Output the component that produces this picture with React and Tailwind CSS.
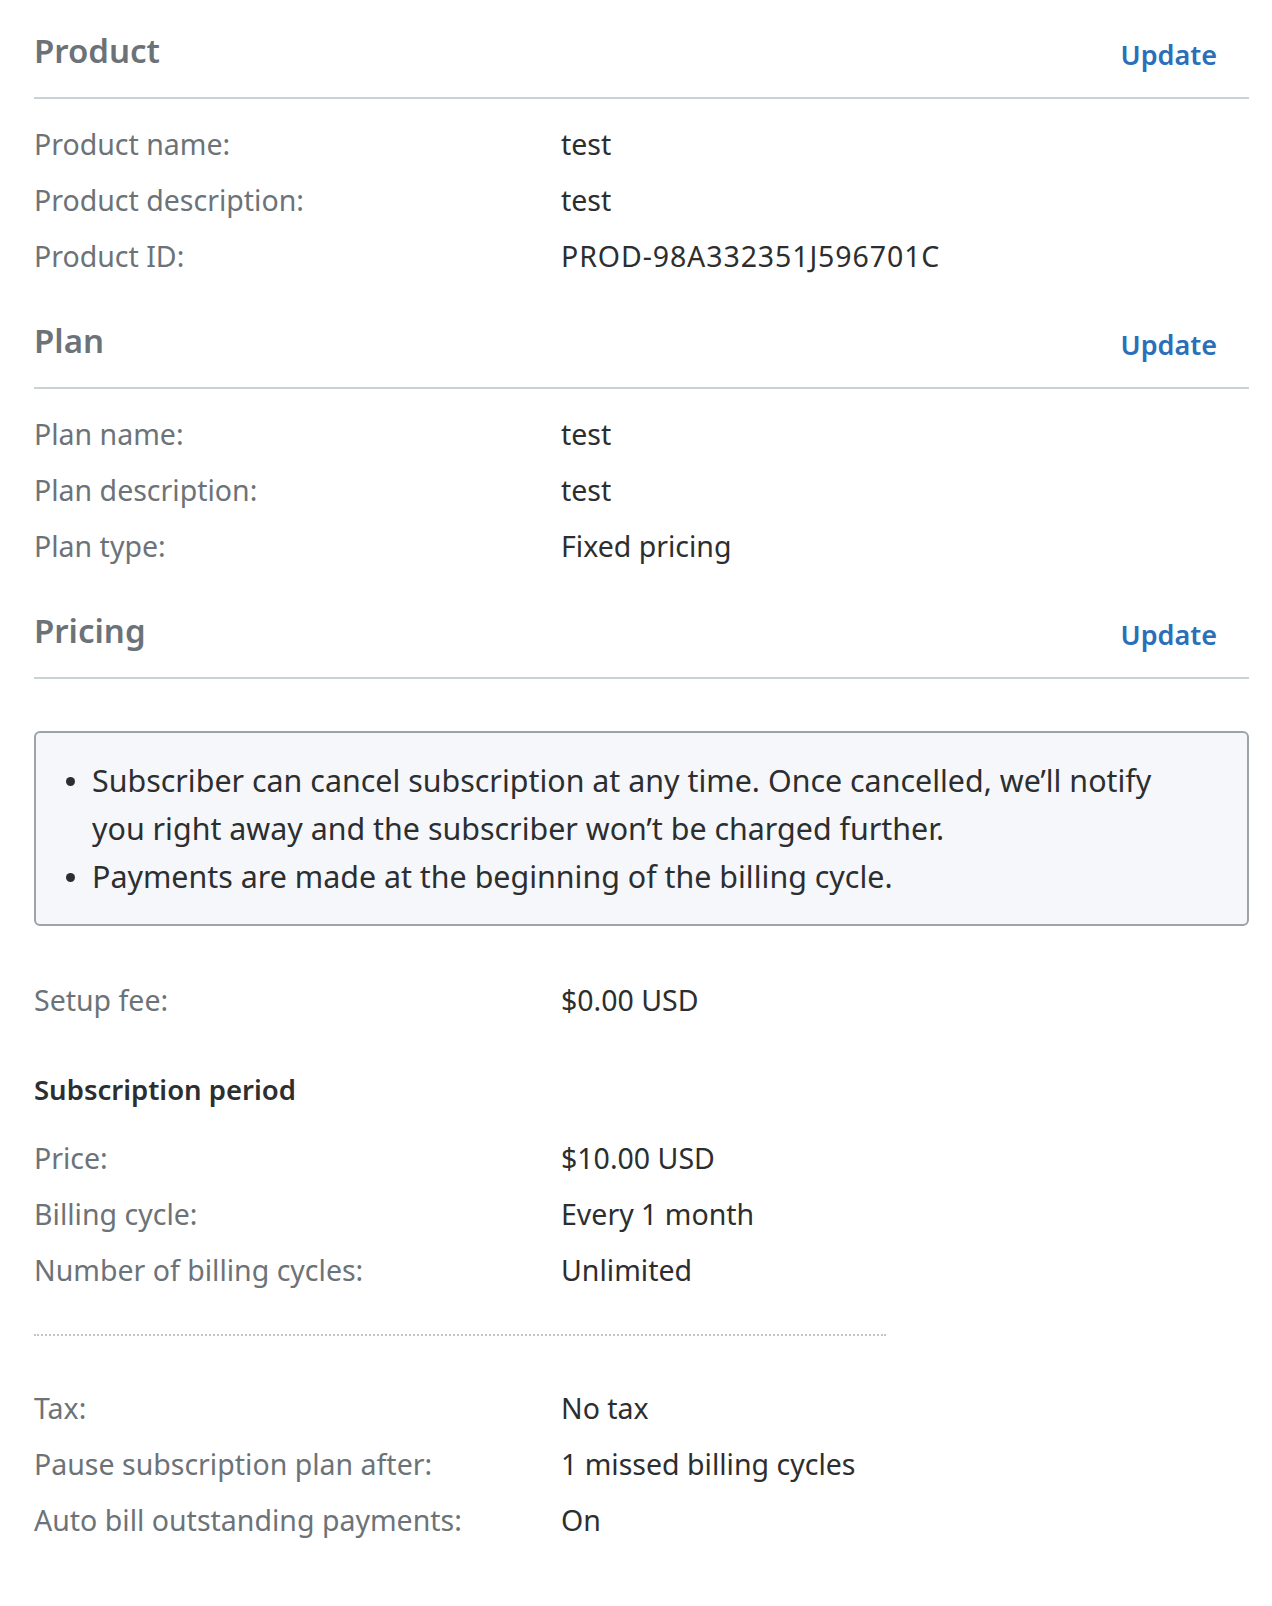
const font = { fontFamily: '"Noto Sans", "Open Sans", sans-serif' };

function SectionHeader({ title, first }) {
  return (
    <div
      className={`flex justify-between items-start border-b-2 border-[#cbd2d6] pb-[22px] ${
        first ? 'pt-[31px]' : 'pt-[37px]'
      }`}
    >
      <h2 className="text-[33px] leading-[40px] font-semibold text-[#6c7378]">{title}</h2>
      <a href="#" className="mt-[4px] mr-[32px] text-[27px] leading-[40px] font-semibold text-[#2a6fb7]">
        Update
      </a>
    </div>
  );
}

function Row({ label, value, mono }) {
  return (
    <div className="flex text-[28.5px] leading-[56px]">
      <div className="w-[527px] shrink-0 text-[#6c7378]">{label}</div>
      <div className={`text-[#2c2e2f] ${mono ? 'tracking-[0.9px]' : ''}`}>{value}</div>
    </div>
  );
}

function Bullet({ children }) {
  return (
    <div className="flex">
      <span className="w-[26px] shrink-0 pt-[20px]">
        <span className="block w-[9px] h-[9px] rounded-full bg-[#2c2e2f]" />
      </span>
      <span>{children}</span>
    </div>
  );
}

export default function App() {
  return (
    <div className="min-h-[1606px] bg-white pl-[34px] pr-[23px]" style={font}>
      <SectionHeader title="Product" first />
      <div className="mt-[17px]">
        <Row label="Product name:" value="test" />
        <Row label="Product description:" value="test" />
        <Row label="Product ID:" value="PROD-98A332351J596701C" mono />
      </div>

      <SectionHeader title="Plan" />
      <div className="mt-[17px]">
        <Row label="Plan name:" value="test" />
        <Row label="Plan description:" value="test" />
        <Row label="Plan type:" value="Fixed pricing" />
      </div>

      <SectionHeader title="Pricing" />
      <div className="mt-[52px] rounded-[6px] border-2 border-[#9da3a6] bg-[#f5f7fa] pl-[30px] pt-[24px] pb-[23px]">
        <div className="max-w-[1110px] text-[30.4px] leading-[48px] text-[#2c2e2f]">
          <Bullet>
            Subscriber can cancel subscription at any time. Once cancelled, we’ll notify you right away and the
            subscriber won’t be charged further.
          </Bullet>
          <Bullet>Payments are made at the beginning of the billing cycle.</Bullet>
        </div>
      </div>

      <div className="mt-[46px]">
        <Row label="Setup fee:" value="$0.00 USD" />
      </div>

      <h3 className="mt-[42px] text-[27.5px] leading-[40px] font-semibold text-[#2c2e2f]">Subscription period</h3>
      <div className="mt-[20px]">
        <Row label="Price:" value="$10.00 USD" />
        <Row label="Billing cycle:" value="Every 1 month" />
        <Row label="Number of billing cycles:" value="Unlimited" />
      </div>

      <div className="mt-[36px] w-[852px] border-t-2 border-dotted border-[#c4c4c4]" />

      <div className="mt-[44px]">
        <Row label="Tax:" value="No tax" />
        <Row label="Pause subscription plan after:" value="1 missed billing cycles" />
        <Row label="Auto bill outstanding payments:" value="On" />
      </div>
    </div>
  );
}
